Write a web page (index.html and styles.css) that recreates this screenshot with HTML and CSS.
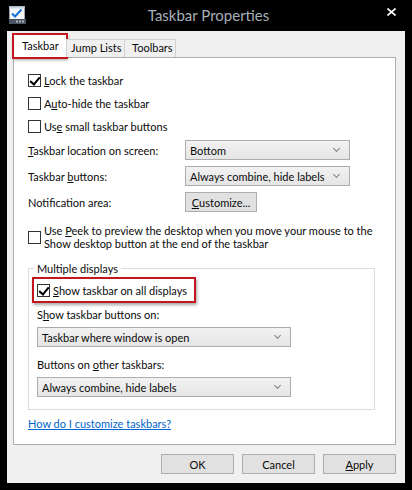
FILE: index.html
```html
<!DOCTYPE html>
<html>
<head>
<meta charset="utf-8">
<link rel="stylesheet" href="styles.css">
</head>
<body>
<div class="window">
  <div class="titlebar">
    <svg class="app-icon" width="17" height="18" viewBox="0 0 17 18">
      <rect x="0.5" y="0.5" width="15" height="13" fill="#f4f6f8" stroke="#9aa3ad"/>
      <rect x="0.5" y="0.5" width="15" height="2" fill="#c9d3de"/>
      <path d="M3 7.5 L6 10.5 L12.5 3.5" fill="none" stroke="#1a73d9" stroke-width="2"/>
      <rect x="0" y="13" width="17" height="5" fill="#4a5360"/>
      <rect x="7" y="14.5" width="2" height="2" fill="#aab3bd"/>
      <rect x="10" y="14.5" width="2" height="2" fill="#aab3bd"/>
      <rect x="13" y="14.5" width="2" height="2" fill="#aab3bd"/>
    </svg>
    <div class="title">Taskbar Properties</div>
    <svg class="close" width="9" height="8" viewBox="0 0 9 8">
      <path d="M0.5 0.5 L8.5 7.5 M8.5 0.5 L0.5 7.5" stroke="#fff" stroke-width="1.6"/>
    </svg>
  </div>
  <div class="client">
    <div class="tabs">
      <div class="tab selected">Taskbar</div>
      <div class="tab">Jump Lists</div>
      <div class="tab">Toolbars</div>
    </div>
    <div class="panel">
      <label class="check-row"><span class="cb checked"></span><span><u>L</u>ock the taskbar</span></label>
      <label class="check-row"><span class="cb"></span><span>A<u>u</u>to-hide the taskbar</span></label>
      <label class="check-row"><span class="cb"></span><span>Us<u>e</u> small taskbar buttons</span></label>

      <div class="field-row first"><span class="field-label"><u>T</u>askbar location on screen:</span><div class="select short"><span>Bottom</span><span class="chev"></span></div></div>
      <div class="field-row"><span class="field-label">Taskbar <u>b</u>uttons:</span><div class="select short"><span>Always combine, hide labels</span><span class="chev"></span></div></div>
      <div class="field-row"><span class="field-label">Notification area:</span><div class="btn customize"><u>C</u>ustomize...</div></div>

      <label class="check-row peek"><span class="cb"></span><span>Use <u>P</u>eek to preview the desktop when you move your mouse to the<br>Show desktop button at the end of the taskbar</span></label>

      <fieldset class="group">
        <legend>Multiple displays</legend>
        <label class="check-row highlight"><span class="cb checked"></span><span><u>S</u>how taskbar on all displays</span></label>
        <div class="group-label">S<u>h</u>ow taskbar buttons on:</div>
        <div class="select long"><span>Taskbar where window is open</span><span class="chev"></span></div>
        <div class="group-label second">Buttons on <u>o</u>ther taskbars:</div>
        <div class="select long"><span>Always combine, hide labels</span><span class="chev"></span></div>
      </fieldset>

      <a class="help" href="#">How do I customize taskbars?</a>
    </div>
    <div class="buttons">
      <div class="btn dlg">OK</div>
      <div class="btn dlg">Cancel</div>
      <div class="btn dlg"><u>A</u>pply</div>
    </div>
  </div>
</div>
</body>
</html>
```

FILE: styles.css
```css
* { box-sizing: border-box; }
html, body { margin: 0; padding: 0; background: #000; }
body { font-family: "Segoe UI", Lato, "Noto Sans", sans-serif; font-size: 11px; color: #0a0a0a; white-space: nowrap; }
u { text-decoration: underline; text-underline-offset: 1px; }

.window { width: 412px; height: 490px; background: #000; display: flex; flex-direction: column; }

.titlebar { height: 31px; display: flex; align-items: center; padding: 0 16px 0 9px; }
.app-icon { display: block; margin-top: -1px; }
.title { flex: 1; text-align: center; color: #a7b0ba; font-size: 15px; margin-left: 4px; margin-top: -2px; }
.close { display: block; margin-top: -8px; }

.client { margin: 0 7px; height: 452px; background: #f0f0f0; padding: 0 9px 0 6px; display: flex; flex-direction: column; }

.tabs { display: flex; align-items: flex-end; height: 26px; padding-top: 3px; position: relative; z-index: 1; }
.tab { height: 18px; border: 1px solid #d0d0d0; border-bottom: none; background: #f0f0f0; padding: 0 0 0 4px; line-height: 16px; }
.tab + .tab { margin-left: -1px; }
.tab:nth-child(2) { width: 59px; }
.tab:nth-child(3) { width: 52px; padding-left: 7px; }
.tab.selected { height: 24px; width: 54px; background: #fff; padding: 3px 0 0 8px; margin-bottom: -1px; outline: 2px solid #c4161c; outline-offset: -1px; box-shadow: 1px 2px 3px rgba(0,0,0,0.35); }

.panel { height: 388px; background: #fff; border: 1px solid #adadad; padding: 11px 10px 0 14px; display: flex; flex-direction: column; }

.check-row { display: flex; align-items: center; height: 23px; }
.cb { width: 13px; height: 13px; border: 1px solid #333; background: #fff; margin-right: 3px; flex: none; position: relative; }
.cb.checked::after { content: ""; position: absolute; left: 3px; top: 0; width: 4px; height: 8px; border: solid #000; border-width: 0 2px 2px 0; transform: rotate(40deg); }

.field-row { display: flex; align-items: center; height: 20px; margin-top: 6px; }
.field-row.first { margin-top: 2px; }
.field-label { width: 157px; flex: none; }

.select { height: 20px; border: 1px solid #acacac; background: linear-gradient(#f2f2f2, #e5e5e5); display: flex; align-items: center; justify-content: space-between; padding: 0 10px 0 4px; }
.select.short { width: 165px; }
.select.long { width: 254px; }
.chev { width: 5px; height: 5px; border: solid #808080; border-width: 0 1.5px 1.5px 0; transform: rotate(45deg); margin-top: -3px; }

.btn { height: 20px; border: 1px solid #adadad; background: #e1e1e1; display: flex; align-items: center; justify-content: center; }
.customize { width: 72px; }

.check-row.peek { height: 26px; margin-top: 12px; line-height: 13px; }

.group { margin: 11px 10px 0 0; padding: 0 10px 12px 8px; border: 1px solid #dcdcdc; min-width: 0; }
.group legend { padding: 0 3px; margin-left: -3px; line-height: 15px; }
.check-row.highlight { width: 164px; height: 26px; margin: 1px 0 0 -5px; padding-left: 3px; border: 2px solid #c4161c; box-shadow: 1px 2px 3px rgba(0,0,0,0.35); }
.group-label { line-height: 15px; margin-top: 4px; }
.group-label + .select { margin-top: 5px; }
.group-label.second { margin-top: 10px; }

.help { margin-top: 6px; line-height: 15px; color: #0066cc; text-decoration: underline; align-self: flex-start; }

.buttons { display: flex; justify-content: flex-end; gap: 8px; margin-top: 9px; }
.btn.dlg { width: 73px; }
```
